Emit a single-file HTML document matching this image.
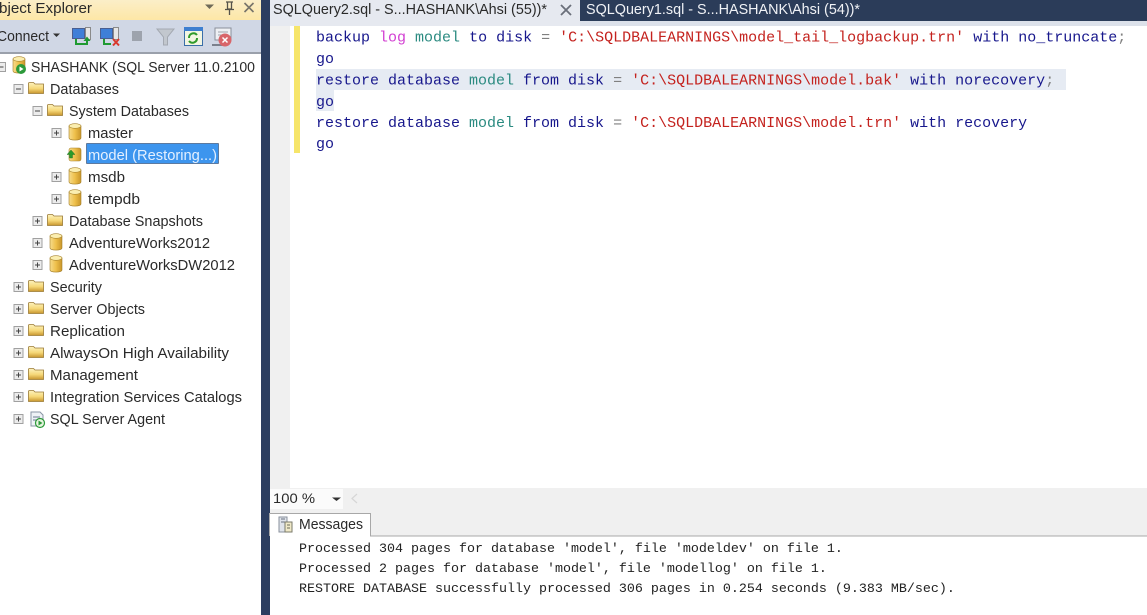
<!DOCTYPE html>
<html><head><meta charset="utf-8"><style>
html,body{margin:0;padding:0;background:#fff;width:1147px;height:615px;overflow:hidden}
svg{display:block}
.u{font-family:"Liberation Sans",sans-serif;font-size:14.5px;fill:#2a2a2a}
.m{font-family:"Liberation Mono",monospace;font-size:15px;white-space:pre}
.o{font-family:"Liberation Mono",monospace;font-size:13.33px;fill:#222;white-space:pre}
.k{fill:#17178c}.t{fill:#2a8a80}.s{fill:#c4221e}.g{fill:#808080}.p{fill:#d23fd2}
</style></head><body>
<svg width="1147" height="615" viewBox="0 0 1147 615" xmlns="http://www.w3.org/2000/svg">
<defs>
<linearGradient id="cy" x1="0" x2="1" y1="0" y2="0"><stop offset="0" stop-color="#f6dc8c"/><stop offset=".5" stop-color="#eebf4a"/><stop offset="1" stop-color="#c8952a"/></linearGradient>
<linearGradient id="fo" x1="0" x2="0" y1="0" y2="1"><stop offset="0" stop-color="#fdf3c0"/><stop offset=".55" stop-color="#f6d878"/><stop offset="1" stop-color="#c8962e"/></linearGradient>
<linearGradient id="tb" x1="0" x2="0" y1="0" y2="1"><stop offset="0" stop-color="#fbeec8"/><stop offset="1" stop-color="#fde7a6"/></linearGradient>
<g id="plus"><rect x="-4.5" y="-4.5" width="9" height="9" fill="#ececec" stroke="#a0a0a0"/><path d="M-2.5 0H2.5M0 -2.5V2.5" stroke="#444"/></g>
<g id="minus"><rect x="-4.5" y="-4.5" width="9" height="9" fill="#ececec" stroke="#a0a0a0"/><path d="M-2.5 0H2.5" stroke="#444"/></g>
<g id="folder"><path d="M-7.5 5.5V-4.500Q-7.500 -5.500 -6.500 -5.500H-2.500L-1 -4H7.5V5.5Z" fill="url(#fo)" stroke="#9a7a34" stroke-width=".8"/></g>
<g id="cyl"><path d="M-6 -6V6C-6 8.800 6 8.800 6 6V-6Z" fill="url(#cy)" stroke="#a5802c" stroke-width=".6"/><ellipse cx="0" cy="-6" rx="6" ry="2.300" fill="#fbeeb0" stroke="#a5802c" stroke-width=".6"/></g>
</defs>

<!-- left panel -->
<rect x="0" y="0" width="261" height="615" fill="#fff"/>
<rect x="0" y="0" width="261" height="20" fill="url(#tb)"/>
<rect x="0" y="20" width="261" height="33" fill="#d0d7e5"/>
<rect x="0" y="52" width="261" height="2" fill="#9aa0ab"/>
<text class="u" x="-1" y="13" textLength="93" lengthAdjust="spacingAndGlyphs">bject Explorer</text>
<path d="M205 4.500H214L209.500 9Z" fill="#6f6a58"/>
<path d="M226 2H233M227.500 2V9H231.500V2M225 9.500H234M229.500 10V15" stroke="#55534a" stroke-width="1.300" fill="none"/>
<path d="M244.500 3L253.500 12M253.500 3L244.500 12" stroke="#77746a" stroke-width="1.600"/>
<text class="u" x="-3" y="41" textLength="52" lengthAdjust="spacingAndGlyphs">Connect</text>
<path d="M53 33.500H60L56.500 37Z" fill="#333"/>
<!-- connect icon -->
<rect x="72.500" y="28.500" width="12" height="10" fill="#3f7fd8" stroke="#4a5f90"/><rect x="85.500" y="27.500" width="5" height="12" fill="#e6e6e6" stroke="#8a8a8a"/>
<path d="M76 39V44H87V40" stroke="#1f9a32" stroke-width="2" fill="none"/><path d="M83.500 41L87 36.500L90.500 41Z" fill="#1f9a32"/>
<!-- disconnect icon -->
<rect x="100.500" y="28.500" width="12" height="10" fill="#3f7fd8" stroke="#4a5f90"/><rect x="113.500" y="27.500" width="5" height="12" fill="#e6e6e6" stroke="#8a8a8a"/>
<path d="M104 39V44H111" stroke="#1f9a32" stroke-width="2" fill="none"/><path d="M113 39L119 45.500M119 39L113 45.500" stroke="#d8382c" stroke-width="2"/>
<!-- stop -->
<rect x="132" y="31" width="10" height="10" fill="#9da3ad"/>
<!-- filter -->
<path d="M157 29H174L167.500 37V45H163.500V37Z" fill="#c2c7ce" stroke="#a4a9b2"/>
<!-- refresh -->
<rect x="184.500" y="27.500" width="18" height="18" fill="#f3f6e2" stroke="#3a6ea8"/><rect x="184" y="27" width="19" height="4" fill="#3d7fd0"/>
<path d="M189 38A4.500 4.500 0 0 1 197 35M197 38A4.500 4.500 0 0 1 189 41" stroke="#2f9a2a" stroke-width="2" fill="none"/>
<!-- script stop -->
<path d="M215 28H231V40H215Z" fill="#eef0f4" stroke="#8a8f9a"/><path d="M212 45H226" stroke="#7a808c" stroke-width="2"/>
<path d="M218 32H228M218 35H226" stroke="#a0a4ac"/>
<circle cx="225" cy="40" r="6.500" fill="#d8656a"/><path d="M222.500 37.500L227.500 42.500M227.500 37.500L222.500 42.500" stroke="#fff" stroke-width="1.500"/>

<!-- tree -->
<use href="#minus" x="1" y="67"/>
<use href="#cyl" x="19" y="65"/><circle cx="21" cy="69" r="5" fill="#2c9a3a"/><path d="M19.500 66.500L23.500 69L19.500 71.500Z" fill="#fff"/>
<text class="u" x="31" y="72" textLength="224" lengthAdjust="spacingAndGlyphs">SHASHANK (SQL Server 11.0.2100</text>

<use href="#minus" x="18.500" y="89"/><use href="#folder" x="36" y="88"/>
<text class="u" x="50" y="94" textLength="69" lengthAdjust="spacingAndGlyphs">Databases</text>
<use href="#minus" x="37.500" y="111"/><use href="#folder" x="55" y="110"/>
<text class="u" x="69" y="116" textLength="120" lengthAdjust="spacingAndGlyphs">System Databases</text>

<use href="#plus" x="56.500" y="133"/><use href="#cyl" x="75" y="132"/>
<text class="u" x="88" y="138" textLength="45" lengthAdjust="spacingAndGlyphs">master</text>

<rect x="86.500" y="143.500" width="132" height="20" fill="#3d95ee" stroke="#1a2a4a" stroke-dasharray="1 1"/>
<rect x="69" y="148" width="12" height="13" rx="2" fill="url(#cy)" stroke="#a5802c" stroke-width=".6"/>
<path d="M72 153L68 157.500H70.500V161H73.500V157.500H76Z" fill="#2c9a2a" stroke="#1d6a1d" stroke-width=".4" transform="translate(-1 -3)"/>
<text class="u" x="88" y="160" textLength="129" lengthAdjust="spacingAndGlyphs" style="fill:#e4f0ff">model (Restoring...)</text>

<use href="#plus" x="56.500" y="177"/><use href="#cyl" x="75" y="176"/>
<text class="u" x="88" y="182" textLength="37" lengthAdjust="spacingAndGlyphs">msdb</text>
<use href="#plus" x="56.500" y="199"/><use href="#cyl" x="75" y="198"/>
<text class="u" x="88" y="204" textLength="52" lengthAdjust="spacingAndGlyphs">tempdb</text>

<use href="#plus" x="37.500" y="221"/><use href="#folder" x="55" y="220"/>
<text class="u" x="69" y="226" textLength="134" lengthAdjust="spacingAndGlyphs">Database Snapshots</text>
<use href="#plus" x="37.500" y="243"/><use href="#cyl" x="56" y="242"/>
<text class="u" x="69" y="248" textLength="141" lengthAdjust="spacingAndGlyphs">AdventureWorks2012</text>
<use href="#plus" x="37.500" y="265"/><use href="#cyl" x="56" y="264"/>
<text class="u" x="69" y="270" textLength="166" lengthAdjust="spacingAndGlyphs">AdventureWorksDW2012</text>

<use href="#plus" x="18.500" y="287"/><use href="#folder" x="36" y="286"/>
<text class="u" x="50" y="292" textLength="52" lengthAdjust="spacingAndGlyphs">Security</text>
<use href="#plus" x="18.500" y="309"/><use href="#folder" x="36" y="308"/>
<text class="u" x="50" y="314" textLength="95" lengthAdjust="spacingAndGlyphs">Server Objects</text>
<use href="#plus" x="18.500" y="331"/><use href="#folder" x="36" y="330"/>
<text class="u" x="50" y="336" textLength="75" lengthAdjust="spacingAndGlyphs">Replication</text>
<use href="#plus" x="18.500" y="353"/><use href="#folder" x="36" y="352"/>
<text class="u" x="50" y="358" textLength="179" lengthAdjust="spacingAndGlyphs">AlwaysOn High Availability</text>
<use href="#plus" x="18.500" y="375"/><use href="#folder" x="36" y="374"/>
<text class="u" x="50" y="380" textLength="88" lengthAdjust="spacingAndGlyphs">Management</text>
<use href="#plus" x="18.500" y="397"/><use href="#folder" x="36" y="396"/>
<text class="u" x="50" y="402" textLength="192" lengthAdjust="spacingAndGlyphs">Integration Services Catalogs</text>
<use href="#plus" x="18.500" y="419"/>
<path d="M31 412H40L43 415V426H31Z" fill="#eef2f6" stroke="#8a95a5"/><path d="M33 417H40M33 420H38" stroke="#6a7a90"/>
<circle cx="40" cy="423" r="4.500" fill="#e8f5e0" stroke="#2c9a3a" stroke-width="1.200"/><path d="M38.500 420.500L42.500 423L38.500 425.500Z" fill="#2c9a3a"/>
<text class="u" x="50" y="424" textLength="115" lengthAdjust="spacingAndGlyphs">SQL Server Agent</text>

<!-- stripe -->
<rect x="261" y="0" width="9" height="615" fill="#2c3e60"/>

<!-- tab row -->
<rect x="270" y="0" width="877" height="21" fill="#2b3c59"/>
<rect x="270" y="21" width="877" height="5" fill="#dce1ea"/>
<rect x="270" y="0" width="310" height="26" fill="#e6e9f0"/>
<text class="u" x="273" y="14" textLength="274" lengthAdjust="spacingAndGlyphs">SQLQuery2.sql - S...HASHANK\Ahsi (55))*</text>
<path d="M561 5L571 15M571 5L561 15" stroke="#6a6f7a" stroke-width="1.800"/>
<text class="u" x="586" y="14" textLength="274" lengthAdjust="spacingAndGlyphs" style="fill:#f0f2f6">SQLQuery1.sql - S...HASHANK\Ahsi (54))*</text>

<!-- editor -->
<rect x="270" y="26" width="877" height="462" fill="#fff"/>
<rect x="270" y="26" width="20" height="462" fill="#f0f0f0"/>
<rect x="294" y="26" width="6" height="127" fill="#f6e56a"/>
<rect x="316" y="69" width="750" height="21" fill="#e6ebf3"/>
<rect x="316" y="90" width="18" height="21" fill="#e6ebf3"/>

<text class="m k" x="316" y="41.500">backup <tspan class="p">log</tspan> <tspan class="t">model</tspan> to disk <tspan class="g">=</tspan> <tspan class="s">'C:\SQLDBALEARNINGS\model_tail_logbackup.trn'</tspan> with no_truncate<tspan class="g">;</tspan></text>
<text class="m k" x="316" y="63">go</text>
<text class="m k" x="316" y="84.500">restore database <tspan class="t">model</tspan> from disk <tspan class="g">=</tspan> <tspan class="s">'C:\SQLDBALEARNINGS\model.bak'</tspan> with norecovery<tspan class="g">;</tspan></text>
<text class="m k" x="316" y="106">go</text>
<text class="m k" x="316" y="127">restore database <tspan class="t">model</tspan> from disk <tspan class="g">=</tspan> <tspan class="s">'C:\SQLDBALEARNINGS\model.trn'</tspan> with recovery</text>
<text class="m k" x="316" y="148">go</text>

<!-- scroll row -->
<rect x="270" y="488" width="877" height="22" fill="#f0f0f0"/>
<rect x="270" y="489" width="73" height="20" fill="#fbfbfb"/>
<text class="u" x="273" y="503" textLength="42" lengthAdjust="spacingAndGlyphs" style="font-size:14px">100 %</text>
<path d="M332 497.500H341L336.500 501Z" fill="#333"/>
<path d="M357 494L352 498.500L357 503" stroke="#d6d6d6" fill="none" stroke-width="1.200"/>

<!-- messages -->
<rect x="270" y="510" width="877" height="26" fill="#f0f0f0"/>
<rect x="270" y="535.500" width="877" height="1" fill="#a8a8a8"/>
<path d="M269.500 536V513.500H370.500V536" fill="#fff" stroke="#a8a8a8"/>
<rect x="270" y="535" width="100" height="2" fill="#fff"/>
<path d="M279 517H287V532H279Z" fill="#dfe3ea" stroke="#8a909c"/><path d="M281 519H285M281 522H285" stroke="#6a7080"/>
<path d="M285 522H292V532H285Z" fill="#f0e9c8" stroke="#7a7a6a"/><path d="M287 525H290M287 528H290" stroke="#6a6a5a"/>
<text class="u" x="299" y="529" textLength="64" lengthAdjust="spacingAndGlyphs">Messages</text>
<rect x="270" y="537" width="877" height="78" fill="#fff"/>
<text class="o" x="299" y="552">Processed 304 pages for database 'model', file 'modeldev' on file 1.</text>
<text class="o" x="299" y="572">Processed 2 pages for database 'model', file 'modellog' on file 1.</text>
<text class="o" x="299" y="592">RESTORE DATABASE successfully processed 306 pages in 0.254 seconds (9.383 MB/sec).</text>
</svg>
</body></html>
